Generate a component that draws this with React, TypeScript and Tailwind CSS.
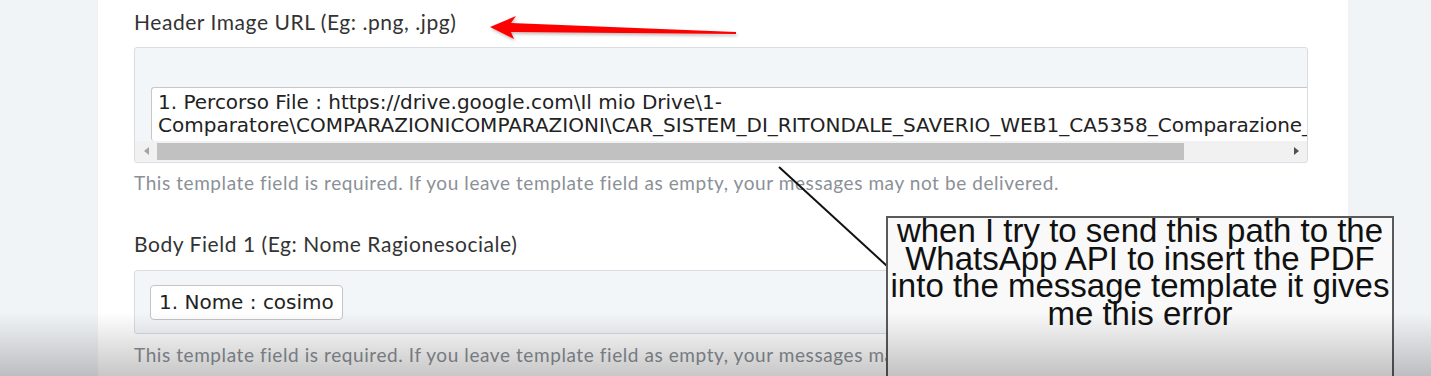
import React from "react";

const labelFont = { fontFamily: "Lato, 'Open Sans', sans-serif" };
const fieldFont = { fontFamily: "'DejaVu Sans', Verdana, sans-serif" };

const HELP =
  "This template field is required. If you leave template field as empty, your messages may not be delivered.";

function FakeScrollbar() {
  return (
    <div className="flex h-[20px] items-center bg-[#f1f1f1]">
      <div className="flex w-[22px] justify-center">
        <span className="h-0 w-0 border-y-[4px] border-r-[5px] border-y-transparent border-r-[#a3a3a3]" />
      </div>
      <div className="h-[17px] w-[1027px] bg-[#c1c1c1]" />
      <div className="flex-1" />
      <div className="flex w-[22px] justify-center">
        <span className="h-0 w-0 border-y-[4px] border-l-[5px] border-y-transparent border-l-[#505050]" />
      </div>
    </div>
  );
}

function Overlay() {
  return (
    <svg
      className="pointer-events-none absolute inset-0"
      width="1431"
      height="376"
      viewBox="0 0 1431 376"
    >
      <defs>
        <filter id="sh" x="-10%" y="-50%" width="120%" height="200%">
          <feDropShadow dx="1" dy="2" stdDeviation="1.5" floodColor="#000" floodOpacity="0.25" />
        </filter>
      </defs>
      <polygon
        points="490,27 516,16 511,23 736,32 736,34 511,32 514,39"
        fill="#ff0000"
        filter="url(#sh)"
      />
      <line x1="779" y1="167" x2="887" y2="266" stroke="#111" strokeWidth="2" />
    </svg>
  );
}

export default function App() {
  return (
    <div className="relative flex h-[376px] w-[1431px] overflow-hidden bg-[#f1f4f7]">
      <div className="w-[98px] shrink-0" />
      <div className="w-[1250px] shrink-0 bg-white pl-[36px] pr-[40px] pt-[10px]">
        <div className="text-[21px] leading-[24px] tracking-[0.55px] text-[#333]" style={labelFont}>
          Header Image URL (Eg: .png, .jpg)
        </div>
        <div className="mt-[13px] h-[116px] overflow-hidden rounded-[3px] border border-[#d9dde1] bg-[#f3f6f9]">
          <div className="h-[39px]" />
          <div
            className="ml-[16px] h-[54px] overflow-hidden rounded-l-[3px] border-l border-t border-[#c8c8c8] bg-white pl-[6px] pt-[3px] text-[20px] leading-[23px] text-[#222] whitespace-nowrap"
            style={fieldFont}
          >
            <div>1. Percorso File : https://drive.google.com\Il mio Drive\1-</div>
            <div>
              Comparatore\COMPARAZIONICOMPARAZIONI\CAR_SISTEM_DI_RITONDALE_SAVERIO_WEB1_CA5358_Comparazione_Offerta.pdf
            </div>
          </div>
          <FakeScrollbar />
        </div>
        <div className="mt-[10px] text-[19px] leading-[20px] tracking-[0.58px] text-[#8b9097]" style={labelFont}>
          {HELP}
        </div>

        <div className="mt-[39px] text-[21px] leading-[24px] tracking-[0.55px] text-[#333]" style={labelFont}>
          Body Field 1 (Eg: Nome Ragionesociale)
        </div>
        <div className="mt-[14px] flex h-[64px] items-center rounded-[3px] border border-[#d9dde1] bg-[#f3f6f9] pl-[15px]">
          <div
            className="rounded-[4px] border border-[#c4c4c4] bg-white px-[8px] py-[5px] text-[20px] leading-[23px] text-[#222]"
            style={fieldFont}
          >
            1. Nome : cosimo
          </div>
        </div>
        <div className="mt-[11px] text-[19px] leading-[20px] tracking-[0.58px] text-[#8b9097]" style={labelFont}>
          {HELP}
        </div>
      </div>
      <div className="flex-1" />

      <Overlay />

      <div className="absolute left-[886px] top-[216px] h-[180px] w-[508px] border-2 border-[#5a5a5a] bg-[#f8f9f8] text-center">
        <p
          className="-mt-[1px] text-[33px] leading-[27.5px] text-[#111]"
          style={{ fontFamily: "'Liberation Sans', Arial, sans-serif" }}
        >
          when I try to send this path to the
          <br />
          WhatsApp API to insert the PDF
          <br />
          into the message template it gives
          <br />
          me this error
        </p>
      </div>

      <div className="pointer-events-none absolute inset-x-0 bottom-0 h-[64px] bg-gradient-to-b from-transparent to-[#00000038]" />
    </div>
  );
}
